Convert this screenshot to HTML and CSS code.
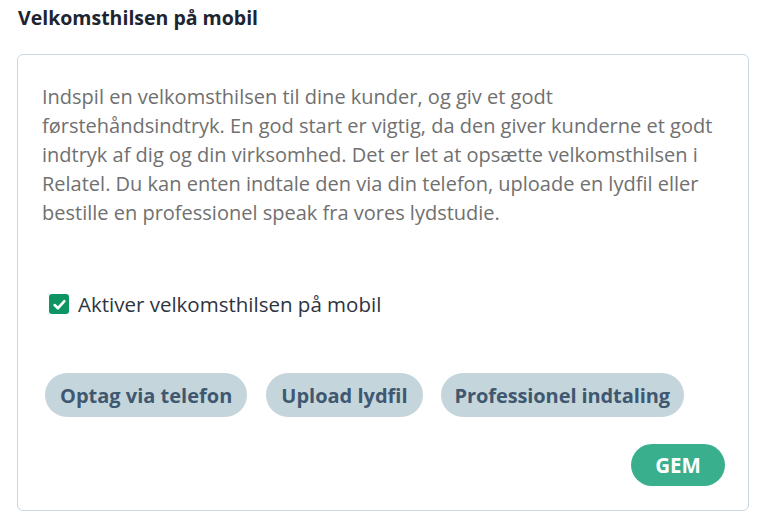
FILE: index.html
```html
<!DOCTYPE html>
<html lang="da">
<head>
<meta charset="utf-8">
<link rel="stylesheet" href="styles.css">
</head>
<body>
<div class="page">
  <h2 class="title">Velkomsthilsen på mobil</h2>
  <div class="card">
    <p class="desc">Indspil en velkomsthilsen til dine kunder, og giv et godt førstehåndsindtryk. En god start er vigtig, da den giver kunderne et godt indtryk af dig og din virksomhed. Det er let at opsætte velkomsthilsen i Relatel. Du kan enten indtale den via din telefon, uploade en lydfil eller bestille en professionel speak fra vores lydstudie.</p>
    <label class="check">
      <span class="box"><svg viewBox="0 0 16 16" width="15" height="15"><path d="M2.8 8.6 L6.3 12 L13.2 4.4" fill="none" stroke="#fff" stroke-width="2.8" stroke-linecap="round" stroke-linejoin="round"/></svg></span>
      <span class="check-label">Aktiver velkomsthilsen på mobil</span>
    </label>
    <div class="actions">
      <button class="pill">Optag via telefon</button>
      <button class="pill">Upload lydfil</button>
      <button class="pill">Professionel indtaling</button>
    </div>
    <div class="save-row">
      <button class="save">GEM</button>
    </div>
  </div>
</div>
</body>
</html>
```

FILE: styles.css
```css
* { box-sizing: border-box; }
html, body { margin: 0; padding: 0; background: #fff; }
body { font-family: "Open Sans", "Noto Sans", sans-serif; }
.page { padding: 4px 16px 0 17px; }
.title {
  margin: 0 0 0 1px;
  font-size: 19.5px;
  font-weight: 700;
  color: #1e2530;
  line-height: 28px;
}
.card {
  margin-top: 22px;
  width: 732px;
  height: 457px;
  border: 1px solid #c9d7de;
  border-radius: 6px;
  padding: 27px 22px 0 24px;
}
.desc {
  margin: 0;
  font-size: 20px;
  line-height: 29px;
  color: #707070;
}
.check {
  display: flex;
  align-items: center;
  margin: 63px 0 0 7px;
  gap: 9px;
  height: 28px;
}
.box {
  width: 20px;
  height: 20px;
  border-radius: 3px;
  background: #0d9463;
  display: flex;
  align-items: center;
  justify-content: center;
}
.check-label {
  font-size: 20.5px;
  color: #2d3440;
}
.actions {
  display: flex;
  gap: 19px;
  margin: 55px 0 0 3px;
}
.pill {
  border: none;
  background: #c5d5dc;
  color: #3f5870;
  font-family: inherit;
  font-weight: 700;
  font-size: 20px;
  height: 44px;
  padding: 0 15px;
  border-radius: 22px;
}
.pill:last-child { padding: 0 14px; margin-left: -1px; letter-spacing: -0.1px; }
.save-row {
  display: flex;
  justify-content: flex-end;
  margin-top: 27px;
  padding-right: 1px;
}
.save {
  border: none;
  background: #3aaf8e;
  color: #fff;
  font-family: inherit;
  font-weight: 700;
  font-size: 20.5px;
  height: 42px;
  width: 94px;
  border-radius: 21px;
}
```
